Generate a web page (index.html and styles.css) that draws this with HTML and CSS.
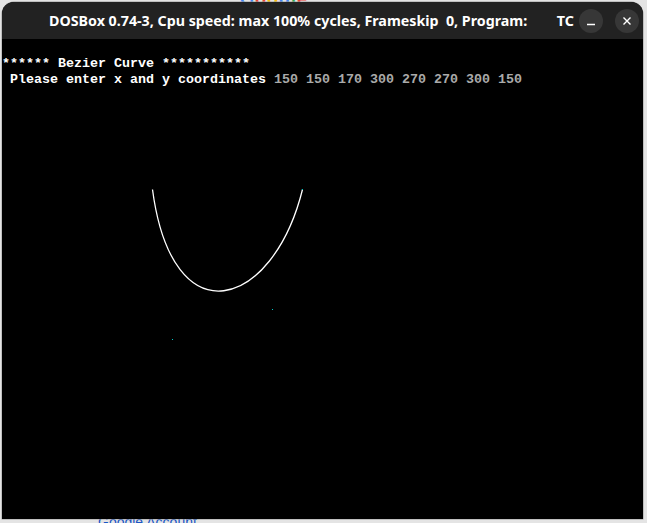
FILE: index.html
```html
<!DOCTYPE html>
<html>
<head>
<meta charset="utf-8">
<link rel="stylesheet" href="styles.css">
</head>
<body>
<div class="page">
  <div class="bg-logo"><span class="b">G</span><span class="r">o</span><span class="y">o</span><span class="b">g</span><span class="g">l</span><span class="r">e</span></div>
  <div class="window">
    <div class="titlebar">
      <div class="title">DOSBox 0.74-3, Cpu speed: max 100% cycles, Frameskip  0, Program:        TC</div>
      <div class="btns">
        <div class="btn"><svg width="24" height="24" viewBox="0 0 24 24"><line x1="8" y1="15.5" x2="16" y2="15.5" stroke="#fff" stroke-width="1.4"/></svg></div>
        <div class="btn"><svg width="24" height="24" viewBox="0 0 24 24"><path d="M8.5 8.5 L15.5 15.5 M15.5 8.5 L8.5 15.5" stroke="#fff" stroke-width="1.4"/></svg></div>
      </div>
    </div>
    <div class="screen">
      <div class="line"> </div>
      <div class="line">****** Bezier Curve ***********</div>
      <div class="line"> Please enter x and y coordinates <span class="input">150 150 170 300 270 270 300 150</span></div>
      <svg class="plot" width="640" height="480" viewBox="0 0 640 480">
        <path d="M150.5 150.5 C170.5 300.5 270.5 270.5 300.5 150.5" fill="none" stroke="#fff" stroke-width="1.3"/>
        <rect x="170" y="300" width="1" height="1" fill="#00c8c8"/>
        <rect x="270" y="270" width="1" height="1" fill="#00c8c8"/>
        <rect x="300" y="150" width="1" height="1" fill="#00c8c8"/>
      </svg>
    </div>
  </div>
  <div class="bg-footer">Google Account</div>
</div>
</body>
</html>
```
FILE: styles.css
```css
html, body {
  margin: 0;
  padding: 0;
}
body {
  background: #e4e4e4;
  width: 647px;
  height: 523px;
  overflow: hidden;
}
.page {
  position: relative;
  width: 647px;
  height: 523px;
  padding: 2px 0 0 2px;
  box-sizing: border-box;
}
.bg-logo {
  position: absolute;
  left: 240px;
  top: -11px;
  font-family: "Liberation Sans", sans-serif;
  font-size: 18px;
  font-weight: bold;
  letter-spacing: 1px;
}
.bg-logo .b { color: #4285f4; }
.bg-logo .r { color: #ea4335; }
.bg-logo .y { color: #fbbc05; }
.bg-logo .g { color: #34a853; }
.bg-footer {
  position: absolute;
  left: 98px;
  top: 514px;
  font-family: "Liberation Sans", sans-serif;
  font-size: 14px;
  color: #1a56c4;
}
.window {
  position: relative;
  z-index: 1;
  width: 641px;
  background: #000;
  border-radius: 12px 12px 0 0;
  overflow: hidden;
  box-shadow: 0 0 0 0.5px #9a9a9a;
}
.titlebar {
  height: 37px;
  background: #222222;
  display: flex;
  align-items: center;
  position: relative;
}
.title {
  font-family: "Noto Sans", "DejaVu Sans", sans-serif;
  font-weight: bold;
  font-size: 14.25px;
  color: #ffffff;
  white-space: pre;
  padding-left: 47px;
}
.btns {
  position: absolute;
  right: 4px;
  top: 7px;
  display: flex;
  gap: 12px;
}
.btn {
  width: 24px;
  height: 24px;
  border-radius: 50%;
  background: #373737;
}
.btn svg { display: block; }
.screen {
  position: relative;
  width: 640px;
  height: 480px;
  padding-top: 1px;
  box-sizing: border-box;
  background: #000;
  font-family: "Liberation Mono", monospace;
  font-size: 13.333px;
  font-weight: bold;
  color: #ffffff;
}
.line {
  height: 16px;
  line-height: 16px;
  white-space: pre;
}
.input { color: #aaaaaa; }
.plot {
  position: absolute;
  left: 0;
  top: 0;
}
```
